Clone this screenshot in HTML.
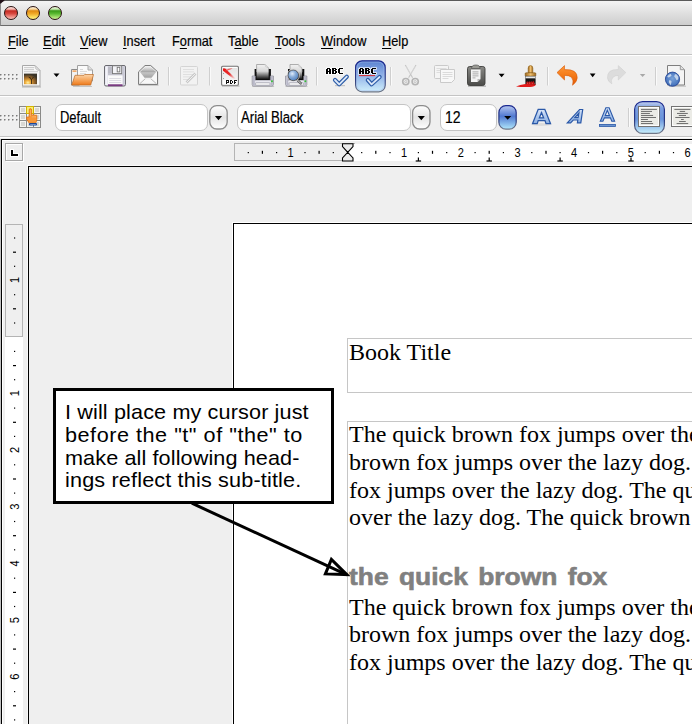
<!DOCTYPE html>
<html><head><meta charset="utf-8">
<style>
*{margin:0;padding:0;box-sizing:border-box}
html,body{width:692px;height:724px;overflow:hidden;background:#efefef;font-family:"Liberation Sans",sans-serif;position:relative}
.a{position:absolute}
#title{left:0;top:0;width:692px;height:26px;background:linear-gradient(#f4f4f4,#dedede 55%,#cdcdcd);border-top:1px solid #5a5a5a;border-left:1px solid #8a8a8a;border-bottom:1px solid #6a6a6a;border-top-left-radius:5px}
.btn{width:14px;height:14px;border-radius:50%;top:5.8px;border:1px solid #2a1210}
.ui{position:absolute;font-size:15px;color:#000;white-space:nowrap;transform:scaleX(0.85);transform-origin:0 0;line-height:17px;-webkit-text-stroke:0.2px #000}
.ui u{text-decoration:underline;text-decoration-thickness:1px;text-underline-offset:1.6px}
.serif{font-family:"Liberation Serif",serif;font-size:24px;color:#000;white-space:nowrap}
.combo{position:absolute;top:104px;height:27px;background:#fff;border:1px solid #c4c4c4;border-radius:7px}
</style></head><body>
<div id="title" class="a"></div>
<div class="a btn" style="left:4px;background:linear-gradient(#fde0dc 0,#f4b8b0 18%,#c42a22 32%,#d84840 55%,#f29a92 85%,#f8c0b8 100%)"></div>
<div class="a btn" style="left:26px;background:linear-gradient(#fdf0d8 0,#f8d8a0 18%,#e08a10 32%,#f0a828 55%,#fce060 85%,#fff080 100%)"></div>
<div class="a btn" style="left:48px;background:linear-gradient(#e8f8e0 0,#c8e8b0 18%,#3a9a18 32%,#58b830 55%,#a8e070 85%,#c8f098 100%)"></div>
<div class="a" style="left:0;top:0;width:5px;height:4px;background:#201018;clip-path:polygon(0 0,100% 0,0 100%)"></div>
<!-- separators -->
<div class="a" style="left:0;top:54px;width:692px;height:1px;background:#c4c4c4"></div>
<div class="a" style="left:0;top:55px;width:692px;height:1px;background:#fff"></div>
<div class="a" style="left:0;top:95px;width:692px;height:1px;background:#c4c4c4"></div>
<div class="a" style="left:0;top:96px;width:692px;height:1px;background:#fff"></div>
<div class="a" style="left:0;top:136px;width:692px;height:1px;background:#c4c4c4"></div>
<div class="a" style="left:0;top:137px;width:692px;height:1px;background:#fff"></div>

<span class="ui" style="left:8px;top:31.8px"><u>F</u>ile</span>
<span class="ui" style="left:43px;top:31.8px"><u>E</u>dit</span>
<span class="ui" style="left:80px;top:31.8px"><u>V</u>iew</span>
<span class="ui" style="left:123px;top:31.8px"><u>I</u>nsert</span>
<span class="ui" style="left:172px;top:31.8px">F<u>o</u>rmat</span>
<span class="ui" style="left:228px;top:31.8px">T<u>a</u>ble</span>
<span class="ui" style="left:275px;top:31.8px"><u>T</u>ools</span>
<span class="ui" style="left:321px;top:31.8px"><u>W</u>indow</span>
<span class="ui" style="left:382px;top:31.8px"><u>H</u>elp</span>

<!-- combos -->
<div class="combo" style="left:55px;width:153px"></div>
<div class="combo" style="left:237px;width:174px"></div>
<div class="combo" style="left:440px;width:57px"></div>
<span class="ui" style="left:60px;top:108.6px;font-size:15.8px;transform:scaleX(0.82)">Default</span>
<span class="ui" style="left:241px;top:108.8px;font-size:15.8px;transform:scaleX(0.835)">Arial Black</span>
<span class="ui" style="left:444.5px;top:109.2px;font-size:16px;transform:scaleX(0.88)">12</span>

<!-- frame + rulers -->
<div class="a" style="left:0;top:139px;width:1px;height:585px;background:#c0c0c0"></div>
<div class="a" style="left:1px;top:139px;width:691px;height:585px;border-top:1px solid #000;border-left:1px solid #000"></div>
<div class="a" style="left:2px;top:140px;width:690px;height:1px;background:#fff"></div>
<div class="a" style="left:2px;top:140px;width:1px;height:584px;background:#fff"></div>
<!-- tab button -->
<div class="a" style="left:5px;top:143px;width:18px;height:18px;border:1px solid #a8a8a8;background:#efefef;box-shadow:1px 1px 0 #fff, inset 1px 1px 0 #fff"></div>
<div class="a" style="left:10px;top:149px;width:4px;height:8px;background:#fff"></div>
<div class="a" style="left:10px;top:153px;width:9px;height:4px;background:#fff"></div>
<div class="a" style="left:11px;top:150px;width:2px;height:6px;background:#000"></div>
<div class="a" style="left:11px;top:154px;width:7px;height:2px;background:#000"></div>
<!-- document area -->
<div class="a" style="left:27px;top:165px;width:665px;height:559px;border-top:1px solid #fafafa;border-left:1px solid #fafafa"></div>
<div class="a" style="left:28px;top:166px;width:664px;height:558px;border-top:1px solid #000;border-left:1px solid #000;background:#efefef"></div>
<div class="a" style="left:232px;top:222px;width:470px;height:510px;border-top:1px solid #fff;border-left:1px solid #fff"></div>
<div class="a" style="left:233px;top:223px;width:470px;height:510px;background:#fff;border-top:1px solid #000;border-left:1px solid #000"></div>

<!-- ICONS and rulers svg -->
<svg class="a" style="left:0;top:0" width="692" height="724">
<defs>
<linearGradient id="gOr" x1="0" y1="0" x2="0" y2="1"><stop offset="0" stop-color="#fcd4a8"/><stop offset="0.5" stop-color="#f6a860"/><stop offset="1" stop-color="#ee7818"/></linearGradient>
<linearGradient id="gImg" x1="0" y1="0" x2="0" y2="1"><stop offset="0" stop-color="#5a4a30"/><stop offset="0.6" stop-color="#c08a30"/><stop offset="1" stop-color="#ffd060"/></linearGradient>
<linearGradient id="gEnv" x1="0" y1="0" x2="0" y2="1"><stop offset="0" stop-color="#f4f4f4"/><stop offset="0.5" stop-color="#a8a8a8"/><stop offset="1" stop-color="#e0e0e0"/></linearGradient>
<linearGradient id="gBlk" x1="0" y1="0" x2="0" y2="1"><stop offset="0" stop-color="#e8e8e8"/><stop offset="0.5" stop-color="#666"/><stop offset="1" stop-color="#000"/></linearGradient>
<linearGradient id="gPrn" x1="0" y1="0" x2="0" y2="1"><stop offset="0" stop-color="#f8f8fa"/><stop offset="1" stop-color="#c8c8d0"/></linearGradient>
<radialGradient id="gGlobe" cx="0.4" cy="0.35" r="0.7"><stop offset="0" stop-color="#9cc0f0"/><stop offset="0.6" stop-color="#3a6ab8"/><stop offset="1" stop-color="#1a3a80"/></radialGradient>
<linearGradient id="gAct" x1="0" y1="0" x2="0" y2="1"><stop offset="0" stop-color="#5a82d0"/><stop offset="0.45" stop-color="#8fb0e6"/><stop offset="1" stop-color="#d0f0fc"/></linearGradient>
<linearGradient id="gBlueBtn" x1="0" y1="0" x2="0" y2="1"><stop offset="0" stop-color="#b8c8f0"/><stop offset="0.45" stop-color="#5078d0"/><stop offset="1" stop-color="#b0e8fc"/></linearGradient>
<linearGradient id="gGrayBtn" x1="0" y1="0" x2="0" y2="1"><stop offset="0" stop-color="#ffffff"/><stop offset="0.5" stop-color="#e4e4e4"/><stop offset="1" stop-color="#ffffff"/></linearGradient>
<linearGradient id="gPaste" x1="0" y1="0" x2="0" y2="1"><stop offset="0" stop-color="#8a8a86"/><stop offset="1" stop-color="#4a4a48"/></linearGradient>
<linearGradient id="gBrush" x1="0" y1="0" x2="1" y2="0"><stop offset="0" stop-color="#a06a20"/><stop offset="0.5" stop-color="#f0c070"/><stop offset="1" stop-color="#a06a20"/></linearGradient>
<linearGradient id="gFA" x1="0" y1="0" x2="0" y2="1"><stop offset="0" stop-color="#d4e2f8"/><stop offset="1" stop-color="#8cb0e2"/></linearGradient>
<linearGradient id="gAct2" x1="0" y1="0" x2="0" y2="1"><stop offset="0" stop-color="#c4d0f0"/><stop offset="0.2" stop-color="#7a9ee0"/><stop offset="0.55" stop-color="#6a94dc"/><stop offset="1" stop-color="#c8f0fc"/></linearGradient>
<linearGradient id="gUndo" x1="0" y1="0" x2="0" y2="1"><stop offset="0" stop-color="#ff9838"/><stop offset="0.5" stop-color="#f47a18"/><stop offset="1" stop-color="#e05a08"/></linearGradient>
<linearGradient id="gBtnStroke" x1="0" y1="0" x2="0" y2="1"><stop offset="0" stop-color="#1a2890"/><stop offset="0.6" stop-color="#2a3a80"/><stop offset="1" stop-color="#707888"/></linearGradient>
</defs>
<rect x="0" y="74" width="1.5" height="1.5" fill="#7a7a7a"/><rect x="1.5" y="75.5" width="1" height="1" fill="#fff"/>
<rect x="0" y="78" width="1.5" height="1.5" fill="#7a7a7a"/><rect x="1.5" y="79.5" width="1" height="1" fill="#fff"/>
<rect x="4" y="74" width="1.5" height="1.5" fill="#7a7a7a"/><rect x="5.5" y="75.5" width="1" height="1" fill="#fff"/>
<rect x="4" y="78" width="1.5" height="1.5" fill="#7a7a7a"/><rect x="5.5" y="79.5" width="1" height="1" fill="#fff"/>
<rect x="8" y="74" width="1.5" height="1.5" fill="#7a7a7a"/><rect x="9.5" y="75.5" width="1" height="1" fill="#fff"/>
<rect x="8" y="78" width="1.5" height="1.5" fill="#7a7a7a"/><rect x="9.5" y="79.5" width="1" height="1" fill="#fff"/>
<rect x="12" y="74" width="1.5" height="1.5" fill="#7a7a7a"/><rect x="13.5" y="75.5" width="1" height="1" fill="#fff"/>
<rect x="12" y="78" width="1.5" height="1.5" fill="#7a7a7a"/><rect x="13.5" y="79.5" width="1" height="1" fill="#fff"/>
<rect x="16" y="74" width="1.5" height="1.5" fill="#7a7a7a"/><rect x="17.5" y="75.5" width="1" height="1" fill="#fff"/>
<rect x="16" y="78" width="1.5" height="1.5" fill="#7a7a7a"/><rect x="17.5" y="79.5" width="1" height="1" fill="#fff"/>
<rect x="0" y="115" width="1.5" height="1.5" fill="#7a7a7a"/><rect x="1.5" y="116.5" width="1" height="1" fill="#fff"/>
<rect x="0" y="119" width="1.5" height="1.5" fill="#7a7a7a"/><rect x="1.5" y="120.5" width="1" height="1" fill="#fff"/>
<rect x="4" y="115" width="1.5" height="1.5" fill="#7a7a7a"/><rect x="5.5" y="116.5" width="1" height="1" fill="#fff"/>
<rect x="4" y="119" width="1.5" height="1.5" fill="#7a7a7a"/><rect x="5.5" y="120.5" width="1" height="1" fill="#fff"/>
<rect x="8" y="115" width="1.5" height="1.5" fill="#7a7a7a"/><rect x="9.5" y="116.5" width="1" height="1" fill="#fff"/>
<rect x="8" y="119" width="1.5" height="1.5" fill="#7a7a7a"/><rect x="9.5" y="120.5" width="1" height="1" fill="#fff"/>
<rect x="12" y="115" width="1.5" height="1.5" fill="#7a7a7a"/><rect x="13.5" y="116.5" width="1" height="1" fill="#fff"/>
<rect x="12" y="119" width="1.5" height="1.5" fill="#7a7a7a"/><rect x="13.5" y="120.5" width="1" height="1" fill="#fff"/>
<rect x="16" y="115" width="1.5" height="1.5" fill="#7a7a7a"/><rect x="17.5" y="116.5" width="1" height="1" fill="#fff"/>
<rect x="16" y="119" width="1.5" height="1.5" fill="#7a7a7a"/><rect x="17.5" y="120.5" width="1" height="1" fill="#fff"/>
<g>
<defs><radialGradient id="gSun" cx="0.3" cy="0.85" r="0.8"><stop offset="0" stop-color="#fff0a0"/><stop offset="0.25" stop-color="#f0b040"/><stop offset="0.6" stop-color="#a06a28"/><stop offset="1" stop-color="#3a3428"/></radialGradient></defs>
<rect x="22" y="86.2" width="19" height="1.4" fill="#8a8a8a" opacity="0.5"/>
<path d="M22.5,65.5 h12.5 l5,5 v15.5 h-17.5 z" fill="#f8f8f8" stroke="#a8a8a8"/>
<path d="M35,65.5 q0,5 5,5 l-5,-5 z" fill="#e4e4e4" stroke="#b8b8b8" stroke-width="0.8"/>
<rect x="24" y="67" width="10" height="1.2" fill="#cfcfcf"/><rect x="24" y="69" width="10" height="1.2" fill="#cfcfcf"/><rect x="24" y="71" width="14" height="1.2" fill="#d4d4d4"/>
<rect x="24" y="73.6" width="13" height="10.6" fill="url(#gSun)"/>
<path d="M31.5,84 v-4.5 M31.5,80 l-1.8,-3 M31.5,79.5 l2,-2.5 M30.2,78 l-1.5,-0.8" stroke="#2a2010" stroke-width="0.8" fill="none"/>
</g>
<polygon points="53.5,73.5 59.5,73.5 56.5,77" fill="#000"/>
<g>
<path d="M71.5,69.5 h8 v15.5 h-8 z" fill="#f2f2f2" stroke="#8a8a8a"/>
<rect x="72.5" y="70.5" width="4" height="1.2" fill="#f08a30"/>
<path d="M77.5,65.5 h10.5 l4.5,4.5 v11 h-15 z" fill="#fafafa" stroke="#a0a0a0"/>
<path d="M88,65.5 v4.5 h4.5" fill="#ddd" stroke="#aaa"/>
<rect x="80" y="69" width="3" height="0.7" fill="#c8c8c8"/><rect x="80" y="71.2" width="7" height="0.7" fill="#d0d0d0"/><rect x="80" y="73.2" width="6" height="0.7" fill="#d0d0d0"/>
<path d="M75,75.3 h9 l0.6,-0.8 h8.9 l-2.8,10.6 h-19 z" fill="url(#gOr)" stroke="#b86a28" stroke-width="0.7"/>
<rect x="73" y="86" width="19" height="1" fill="#999" opacity="0.5"/>
</g>
<g>
<rect x="104.5" y="65.5" width="21" height="20.5" rx="1.5" fill="#dedee8" stroke="#6a6a70"/>
<rect x="105.5" y="66.5" width="2" height="18.5" fill="#f4f4fa"/>
<rect x="122.5" y="66.5" width="2" height="18.5" fill="#c8c8d4"/>
<rect x="108" y="66.5" width="4.6" height="7.2" fill="#bcbcc6"/>
<rect x="108" y="73.7" width="14.5" height="1.5" fill="#c4c4ce"/>
<rect x="112.5" y="65.8" width="9.2" height="7.8" fill="#f4f4f8" stroke="#777" stroke-width="0.9"/>
<rect x="117.2" y="67.3" width="2.6" height="4.6" fill="#fff" stroke="#777" stroke-width="0.9"/>
<rect x="108" y="75.5" width="14.5" height="9" fill="#fafafa"/>
<rect x="109.2" y="78.2" width="12" height="0.7" fill="#cfcfd8"/><rect x="109.2" y="80.3" width="12" height="0.7" fill="#cfcfd8"/><rect x="109.2" y="82.3" width="12" height="0.7" fill="#cfcfd8"/>
<rect x="108" y="84.3" width="14.5" height="1.9" fill="#7a3a80"/>
</g>
<g>
<defs><linearGradient id="gEnv2" x1="0" y1="0" x2="0" y2="1"><stop offset="0" stop-color="#f0f0f0"/><stop offset="0.45" stop-color="#a8a8a8"/><stop offset="0.55" stop-color="#c4c4c4"/><stop offset="1" stop-color="#a0a0a0"/></linearGradient></defs>
<rect x="138.5" y="84.6" width="20" height="1.3" fill="#999" opacity="0.45"/>
<path d="M138.6,71.8 L145,65.6 h5.8 L157.6,71.8 v12.6 h-19 z" fill="#f8f8f8" stroke="#727272" stroke-width="1"/>
<path d="M140,72 L145.4,66.6 h5 L156.2,72 L151.5,77.8 h-7 z" fill="url(#gEnv2)"/>
<path d="M140,83.5 L145.5,78.5 M156.2,83.5 L150.5,78.5" stroke="#a8a8a8" stroke-width="0.8"/>
<rect x="145" y="78.4" width="6" height="1" fill="#e8e8e8"/>
</g>
<rect x="168" y="67" width="1" height="18.5" fill="#cfcfcf"/><rect x="169" y="67" width="1" height="18.5" fill="#fafafa"/>
<g opacity="1">
<rect x="180.5" y="66.5" width="17" height="18.5" rx="1" fill="#f2f2f2" stroke="#d4d4d4"/>
<rect x="183" y="69" width="11" height="0.8" fill="#dadada"/><rect x="183" y="71.5" width="11" height="0.8" fill="#dadada"/><rect x="183" y="74" width="11" height="0.8" fill="#dadada"/><rect x="183" y="76.5" width="8" height="0.8" fill="#dadada"/><rect x="183" y="79" width="6" height="0.8" fill="#dadada"/>
<path d="M186.5,82.5 L195.5,73.5" stroke="#c8c8c8" stroke-width="2.6"/>
<path d="M186.5,82.5 L195.5,73.5" stroke="#eee" stroke-width="1"/>
</g>
<rect x="209" y="67" width="1" height="18.5" fill="#cfcfcf"/><rect x="210" y="67" width="1" height="18.5" fill="#fafafa"/>
<g>
<defs><linearGradient id="gRed" x1="0" y1="0" x2="1" y2="1"><stop offset="0" stop-color="#e81010"/><stop offset="0.55" stop-color="#e83030"/><stop offset="1" stop-color="#f4c0c0" stop-opacity="0.3"/></linearGradient>
<linearGradient id="gPdfBg" x1="0" y1="0" x2="0" y2="1"><stop offset="0" stop-color="#e4e4e4"/><stop offset="1" stop-color="#f8f8f8"/></linearGradient></defs>
<rect x="222" y="85.6" width="17.5" height="1.2" fill="#999" opacity="0.5"/>
<rect x="221.6" y="66.2" width="16.8" height="19" rx="1" fill="#fefefe" stroke="#727272" stroke-width="1.1"/>
<rect x="223" y="68" width="14" height="16" fill="url(#gPdfBg)"/>
<path d="M223,68.6 Q224,67.8 225.6,68.8 L235.5,78.6 Q234.5,79.2 233,78.4 L223,70.8 z" fill="url(#gRed)"/>
<path d="M225,70.5 Q229,68 232.5,68.2 L231,69.3 Q228,70 225.8,71.5 z" fill="#e84040" opacity="0.8"/>
<rect x="223" y="73" width="0.9" height="0.9" fill="#888"/><rect x="223" y="78" width="0.9" height="0.9" fill="#888"/>
<rect x="223" y="80" width="14" height="4.5" fill="#fefefe"/>

<path d="M226,80h1v1h-1zM227,80h1v1h-1zM228,80h1v1h-1zM226,81h1v1h-1zM228,81h1v1h-1zM226,82h1v1h-1zM227,82h1v1h-1zM228,82h1v1h-1zM226,83h1v1h-1zM230,80h1v1h-1zM231,80h1v1h-1zM230,81h1v1h-1zM232,81h1v1h-1zM230,82h1v1h-1zM232,82h1v1h-1zM230,83h1v1h-1zM231,83h1v1h-1zM234,80h1v1h-1zM235,80h1v1h-1zM236,80h1v1h-1zM234,81h1v1h-1zM234,82h1v1h-1zM235,82h1v1h-1zM234,83h1v1h-1z" fill="#141414"/>
<g>
<defs><linearGradient id="gPap251" x1="0" y1="0" x2="0" y2="1"><stop offset="0" stop-color="#f4f4f4"/><stop offset="0.45" stop-color="#d8d8d8"/><stop offset="1" stop-color="#000"/></linearGradient></defs>
<rect x="252.1" y="86" width="22" height="1" fill="#888" opacity="0.4"/>
<rect x="254.6" y="69" width="16.3" height="11" fill="#111"/>
<path d="M256.6,64 h8.2 l3.8,3.8 v12.2 h-12 z" fill="url(#gPap251)"/>
<path d="M256.6,72 v-7.5 h8.2 l3.8,3.8 v4" fill="none" stroke="#9a9a9a" stroke-width="0.8"/>
<path d="M264.8,64 q0,3.8 3.8,3.8 l-3.8,-3.8 z" fill="#e8e8e8" stroke="#bbb" stroke-width="0.5"/>
<path d="M252.2,76 h3 v4.5 h15.2 v-4.5 h3 v8.5 q0,1.5 -1.5,1.5 h-18.2 q-1.5,0 -1.5,-1.5 z" fill="#dcdce6" stroke="#8a8a96" stroke-width="0.8"/>
<rect x="253.0" y="76.6" width="1.8" height="8.5" fill="#b8b8c8"/>
<rect x="271.0" y="76.6" width="1.8" height="8.5" fill="#b8b8c8"/>
<rect x="255.2" y="80.5" width="15.2" height="1.5" fill="#e8e8f0"/>
<rect x="255.6" y="82.8" width="14.4" height="2.4" rx="0.8" fill="#fff" stroke="#8a8a96" stroke-width="0.6"/>
<rect x="271.1" y="80.4" width="1.7" height="1.7" fill="#30c030"/>
</g>
<g>
<defs><linearGradient id="gPap285" x1="0" y1="0" x2="0" y2="1"><stop offset="0" stop-color="#f4f4f4"/><stop offset="0.45" stop-color="#d8d8d8"/><stop offset="1" stop-color="#000"/></linearGradient></defs>
<rect x="285.5" y="86" width="22" height="1" fill="#888" opacity="0.4"/>
<rect x="288" y="69" width="16.3" height="11" fill="#111"/>
<path d="M290,64 h8.2 l3.8,3.8 v12.2 h-12 z" fill="url(#gPap285)"/>
<path d="M290,72 v-7.5 h8.2 l3.8,3.8 v4" fill="none" stroke="#9a9a9a" stroke-width="0.8"/>
<path d="M298.2,64 q0,3.8 3.8,3.8 l-3.8,-3.8 z" fill="#e8e8e8" stroke="#bbb" stroke-width="0.5"/>
<path d="M285.6,76 h3 v4.5 h15.2 v-4.5 h3 v8.5 q0,1.5 -1.5,1.5 h-18.2 q-1.5,0 -1.5,-1.5 z" fill="#dcdce6" stroke="#8a8a96" stroke-width="0.8"/>
<rect x="286.4" y="76.6" width="1.8" height="8.5" fill="#b8b8c8"/>
<rect x="304.4" y="76.6" width="1.8" height="8.5" fill="#b8b8c8"/>
<rect x="288.6" y="80.5" width="15.2" height="1.5" fill="#e8e8f0"/>
<rect x="289" y="82.8" width="14.4" height="2.4" rx="0.8" fill="#fff" stroke="#8a8a96" stroke-width="0.6"/>
<rect x="304.5" y="80.4" width="1.7" height="1.7" fill="#30c030"/>
</g>
<g>
<defs><radialGradient id="gMag" cx="0.4" cy="0.35" r="0.7"><stop offset="0" stop-color="#e0ecfa"/><stop offset="0.45" stop-color="#88acd8"/><stop offset="1" stop-color="#4a7ab8"/></radialGradient></defs>
<path d="M297.2,79.8 L300.8,83.4" stroke="#555" stroke-width="2.4" stroke-linecap="round"/>
<path d="M297.2,79.8 L300.8,83.4" stroke="#ddd" stroke-width="1" stroke-linecap="round"/>
<circle cx="293.3" cy="75.3" r="5.4" fill="url(#gMag)" stroke="#4a4a4a" stroke-width="0.9"/>
<circle cx="293.3" cy="75.3" r="6.2" fill="none" stroke="#ddd" stroke-width="0.6"/>
</g>
<rect x="316" y="67" width="1" height="18.5" fill="#cfcfcf"/><rect x="317" y="67" width="1" height="18.5" fill="#fafafa"/>
<path d="M326.2,67.2h2.6v2.6h-2.6zM327.2,67.2h2.6v2.6h-2.6zM328.2,67.2h2.6v2.6h-2.6zM325.2,68.2h2.6v2.6h-2.6zM326.2,68.2h2.6v2.6h-2.6zM328.2,68.2h2.6v2.6h-2.6zM329.2,68.2h2.6v2.6h-2.6zM325.2,69.2h2.6v2.6h-2.6zM326.2,69.2h2.6v2.6h-2.6zM328.2,69.2h2.6v2.6h-2.6zM329.2,69.2h2.6v2.6h-2.6zM325.2,70.2h2.6v2.6h-2.6zM326.2,70.2h2.6v2.6h-2.6zM327.2,70.2h2.6v2.6h-2.6zM328.2,70.2h2.6v2.6h-2.6zM329.2,70.2h2.6v2.6h-2.6zM325.2,71.2h2.6v2.6h-2.6zM326.2,71.2h2.6v2.6h-2.6zM328.2,71.2h2.6v2.6h-2.6zM329.2,71.2h2.6v2.6h-2.6zM325.2,72.2h2.6v2.6h-2.6zM326.2,72.2h2.6v2.6h-2.6zM328.2,72.2h2.6v2.6h-2.6zM329.2,72.2h2.6v2.6h-2.6zM331.2,67.2h2.6v2.6h-2.6zM332.2,67.2h2.6v2.6h-2.6zM333.2,67.2h2.6v2.6h-2.6zM334.2,67.2h2.6v2.6h-2.6zM331.2,68.2h2.6v2.6h-2.6zM332.2,68.2h2.6v2.6h-2.6zM334.2,68.2h2.6v2.6h-2.6zM335.2,68.2h2.6v2.6h-2.6zM331.2,69.2h2.6v2.6h-2.6zM332.2,69.2h2.6v2.6h-2.6zM333.2,69.2h2.6v2.6h-2.6zM334.2,69.2h2.6v2.6h-2.6zM331.2,70.2h2.6v2.6h-2.6zM332.2,70.2h2.6v2.6h-2.6zM334.2,70.2h2.6v2.6h-2.6zM335.2,70.2h2.6v2.6h-2.6zM331.2,71.2h2.6v2.6h-2.6zM332.2,71.2h2.6v2.6h-2.6zM334.2,71.2h2.6v2.6h-2.6zM335.2,71.2h2.6v2.6h-2.6zM331.2,72.2h2.6v2.6h-2.6zM332.2,72.2h2.6v2.6h-2.6zM333.2,72.2h2.6v2.6h-2.6zM334.2,72.2h2.6v2.6h-2.6zM338.2,67.2h2.6v2.6h-2.6zM339.2,67.2h2.6v2.6h-2.6zM340.2,67.2h2.6v2.6h-2.6zM341.2,67.2h2.6v2.6h-2.6zM337.2,68.2h2.6v2.6h-2.6zM338.2,68.2h2.6v2.6h-2.6zM337.2,69.2h2.6v2.6h-2.6zM338.2,69.2h2.6v2.6h-2.6zM337.2,70.2h2.6v2.6h-2.6zM338.2,70.2h2.6v2.6h-2.6zM337.2,71.2h2.6v2.6h-2.6zM338.2,71.2h2.6v2.6h-2.6zM338.2,72.2h2.6v2.6h-2.6zM339.2,72.2h2.6v2.6h-2.6zM340.2,72.2h2.6v2.6h-2.6zM341.2,72.2h2.6v2.6h-2.6z" fill="#fff" opacity="0.85"/>
<path d="M327,68h1v1h-1zM328,68h1v1h-1zM329,68h1v1h-1zM326,69h1v1h-1zM327,69h1v1h-1zM329,69h1v1h-1zM330,69h1v1h-1zM326,70h1v1h-1zM327,70h1v1h-1zM329,70h1v1h-1zM330,70h1v1h-1zM326,71h1v1h-1zM327,71h1v1h-1zM328,71h1v1h-1zM329,71h1v1h-1zM330,71h1v1h-1zM326,72h1v1h-1zM327,72h1v1h-1zM329,72h1v1h-1zM330,72h1v1h-1zM326,73h1v1h-1zM327,73h1v1h-1zM329,73h1v1h-1zM330,73h1v1h-1zM332,68h1v1h-1zM333,68h1v1h-1zM334,68h1v1h-1zM335,68h1v1h-1zM332,69h1v1h-1zM333,69h1v1h-1zM335,69h1v1h-1zM336,69h1v1h-1zM332,70h1v1h-1zM333,70h1v1h-1zM334,70h1v1h-1zM335,70h1v1h-1zM332,71h1v1h-1zM333,71h1v1h-1zM335,71h1v1h-1zM336,71h1v1h-1zM332,72h1v1h-1zM333,72h1v1h-1zM335,72h1v1h-1zM336,72h1v1h-1zM332,73h1v1h-1zM333,73h1v1h-1zM334,73h1v1h-1zM335,73h1v1h-1zM339,68h1v1h-1zM340,68h1v1h-1zM341,68h1v1h-1zM342,68h1v1h-1zM338,69h1v1h-1zM339,69h1v1h-1zM338,70h1v1h-1zM339,70h1v1h-1zM338,71h1v1h-1zM339,71h1v1h-1zM338,72h1v1h-1zM339,72h1v1h-1zM339,73h1v1h-1zM340,73h1v1h-1zM341,73h1v1h-1zM342,73h1v1h-1z" fill="#000"/>
<rect x="335" y="85" width="10" height="1.2" fill="#888" opacity="0.4"/>
<path d="M335,80 L339.2,84.3 L346.8,76.7" stroke="#2c5ca8" stroke-width="4.2" fill="none" stroke-linecap="round" stroke-linejoin="round"/>
<path d="M335,80 L339.2,84.3 L346.8,76.7" stroke="#dce8f8" stroke-width="1.8" fill="none" stroke-linecap="round" stroke-linejoin="round"/>
<rect x="355.6" y="60.8" width="29.6" height="31" rx="6.5" fill="url(#gAct)" stroke="url(#gBtnStroke)" stroke-width="1.2"/>
<rect x="356.9" y="62.1" width="27" height="28.4" rx="5.5" fill="none" stroke="#a8c0ec" stroke-width="0.8" opacity="0.6"/>
<path d="M359.2,67.2h2.6v2.6h-2.6zM360.2,67.2h2.6v2.6h-2.6zM361.2,67.2h2.6v2.6h-2.6zM358.2,68.2h2.6v2.6h-2.6zM359.2,68.2h2.6v2.6h-2.6zM361.2,68.2h2.6v2.6h-2.6zM362.2,68.2h2.6v2.6h-2.6zM358.2,69.2h2.6v2.6h-2.6zM359.2,69.2h2.6v2.6h-2.6zM361.2,69.2h2.6v2.6h-2.6zM362.2,69.2h2.6v2.6h-2.6zM358.2,70.2h2.6v2.6h-2.6zM359.2,70.2h2.6v2.6h-2.6zM360.2,70.2h2.6v2.6h-2.6zM361.2,70.2h2.6v2.6h-2.6zM362.2,70.2h2.6v2.6h-2.6zM358.2,71.2h2.6v2.6h-2.6zM359.2,71.2h2.6v2.6h-2.6zM361.2,71.2h2.6v2.6h-2.6zM362.2,71.2h2.6v2.6h-2.6zM358.2,72.2h2.6v2.6h-2.6zM359.2,72.2h2.6v2.6h-2.6zM361.2,72.2h2.6v2.6h-2.6zM362.2,72.2h2.6v2.6h-2.6zM364.2,67.2h2.6v2.6h-2.6zM365.2,67.2h2.6v2.6h-2.6zM366.2,67.2h2.6v2.6h-2.6zM367.2,67.2h2.6v2.6h-2.6zM364.2,68.2h2.6v2.6h-2.6zM365.2,68.2h2.6v2.6h-2.6zM367.2,68.2h2.6v2.6h-2.6zM368.2,68.2h2.6v2.6h-2.6zM364.2,69.2h2.6v2.6h-2.6zM365.2,69.2h2.6v2.6h-2.6zM366.2,69.2h2.6v2.6h-2.6zM367.2,69.2h2.6v2.6h-2.6zM364.2,70.2h2.6v2.6h-2.6zM365.2,70.2h2.6v2.6h-2.6zM367.2,70.2h2.6v2.6h-2.6zM368.2,70.2h2.6v2.6h-2.6zM364.2,71.2h2.6v2.6h-2.6zM365.2,71.2h2.6v2.6h-2.6zM367.2,71.2h2.6v2.6h-2.6zM368.2,71.2h2.6v2.6h-2.6zM364.2,72.2h2.6v2.6h-2.6zM365.2,72.2h2.6v2.6h-2.6zM366.2,72.2h2.6v2.6h-2.6zM367.2,72.2h2.6v2.6h-2.6zM371.2,67.2h2.6v2.6h-2.6zM372.2,67.2h2.6v2.6h-2.6zM373.2,67.2h2.6v2.6h-2.6zM374.2,67.2h2.6v2.6h-2.6zM370.2,68.2h2.6v2.6h-2.6zM371.2,68.2h2.6v2.6h-2.6zM370.2,69.2h2.6v2.6h-2.6zM371.2,69.2h2.6v2.6h-2.6zM370.2,70.2h2.6v2.6h-2.6zM371.2,70.2h2.6v2.6h-2.6zM370.2,71.2h2.6v2.6h-2.6zM371.2,71.2h2.6v2.6h-2.6zM371.2,72.2h2.6v2.6h-2.6zM372.2,72.2h2.6v2.6h-2.6zM373.2,72.2h2.6v2.6h-2.6zM374.2,72.2h2.6v2.6h-2.6z" fill="#fff" opacity="0.85"/>
<path d="M360,68h1v1h-1zM361,68h1v1h-1zM362,68h1v1h-1zM359,69h1v1h-1zM360,69h1v1h-1zM362,69h1v1h-1zM363,69h1v1h-1zM359,70h1v1h-1zM360,70h1v1h-1zM362,70h1v1h-1zM363,70h1v1h-1zM359,71h1v1h-1zM360,71h1v1h-1zM361,71h1v1h-1zM362,71h1v1h-1zM363,71h1v1h-1zM359,72h1v1h-1zM360,72h1v1h-1zM362,72h1v1h-1zM363,72h1v1h-1zM359,73h1v1h-1zM360,73h1v1h-1zM362,73h1v1h-1zM363,73h1v1h-1zM365,68h1v1h-1zM366,68h1v1h-1zM367,68h1v1h-1zM368,68h1v1h-1zM365,69h1v1h-1zM366,69h1v1h-1zM368,69h1v1h-1zM369,69h1v1h-1zM365,70h1v1h-1zM366,70h1v1h-1zM367,70h1v1h-1zM368,70h1v1h-1zM365,71h1v1h-1zM366,71h1v1h-1zM368,71h1v1h-1zM369,71h1v1h-1zM365,72h1v1h-1zM366,72h1v1h-1zM368,72h1v1h-1zM369,72h1v1h-1zM365,73h1v1h-1zM366,73h1v1h-1zM367,73h1v1h-1zM368,73h1v1h-1zM372,68h1v1h-1zM373,68h1v1h-1zM374,68h1v1h-1zM375,68h1v1h-1zM371,69h1v1h-1zM372,69h1v1h-1zM371,70h1v1h-1zM372,70h1v1h-1zM371,71h1v1h-1zM372,71h1v1h-1zM371,72h1v1h-1zM372,72h1v1h-1zM372,73h1v1h-1zM373,73h1v1h-1zM374,73h1v1h-1zM375,73h1v1h-1z" fill="#000"/>
<path d="M359,76 l1,-0.8 l1,0.8 l1,-0.8 l1,0.8 l1,-0.8 l1,0.8 l1,-0.8 l1,0.8 l1,-0.8 l1,0.8 l1,-0.8 l1,0.8 l1,-0.8 l1,0.8 l1,-0.8 l1,0.8" stroke="#e01818" stroke-width="0.9" fill="none"/>
<path d="M367.8,80 L371.6,84.3 L379.6,77" stroke="#2c5ca8" stroke-width="4.2" fill="none" stroke-linecap="round" stroke-linejoin="round"/>
<path d="M367.8,80 L371.6,84.3 L379.6,77" stroke="#dce8f8" stroke-width="1.8" fill="none" stroke-linecap="round" stroke-linejoin="round"/>
<rect x="390" y="67" width="1" height="18.5" fill="#cfcfcf"/><rect x="391" y="67" width="1" height="18.5" fill="#fafafa"/>
<g fill="none">
<path d="M405.3,65 L412.6,77.8 M416,65 L408.6,77.8" stroke="#c4c4c4" stroke-width="1.1"/>
<path d="M405.8,66 L410.5,74 M415.5,66 L410.8,74" stroke="#e4e4e4" stroke-width="0.5"/>
<circle cx="405.8" cy="81.6" r="3.1" stroke="#b4b4b4" stroke-width="1.6"/>
<circle cx="415.2" cy="81.6" r="3.1" stroke="#b4b4b4" stroke-width="1.6"/>
<circle cx="405.8" cy="81.6" r="1.1" stroke="#bcbcbc" stroke-width="0.8"/>
<circle cx="415.2" cy="81.6" r="1.1" stroke="#bcbcbc" stroke-width="0.8"/>
</g>
<g>
<rect x="434.5" y="65.5" width="14" height="13" rx="1" fill="#f4f4f4" stroke="#cacaca"/>
<rect x="436.5" y="68" width="10" height="0.8" fill="#d8d8d8"/><rect x="436.5" y="70" width="10" height="0.8" fill="#d8d8d8"/><rect x="436.5" y="72" width="6" height="0.8" fill="#d8d8d8"/>
<path d="M440.5,69.5 h14 v10 l-3,3 h-11 z" fill="#f8f8f8" stroke="#cacaca"/>
<rect x="442.5" y="72" width="10" height="0.8" fill="#d4d4d4"/><rect x="442.5" y="74" width="10" height="0.8" fill="#d4d4d4"/><rect x="442.5" y="76" width="10" height="0.8" fill="#d4d4d4"/><rect x="442.5" y="78" width="6" height="0.8" fill="#d4d4d4"/>
</g>
<g>
<rect x="468" y="85.5" width="18" height="1.3" fill="#777" opacity="0.5"/>
<rect x="467.5" y="66.5" width="17.5" height="19" rx="2.2" fill="url(#gPaste)" stroke="#3e3e3c" stroke-width="0.9"/>
<path d="M471.5,68.5 q0,-3.5 4.3,-3.5 q4.3,0 4.3,3.5 z" fill="#9a9a94" stroke="#555" stroke-width="0.7"/>
<path d="M471,69.5 h9.5 v9.5 l-3,3 h-6.5 z" fill="#f4f4f4"/>
<path d="M477.5,82 v-3 h3" fill="#b8b8b8"/>
<rect x="472.5" y="71.5" width="6" height="0.8" fill="#999"/><rect x="472.5" y="73.5" width="6" height="0.8" fill="#999"/><rect x="472.5" y="75.5" width="6" height="0.8" fill="#999"/><rect x="472.5" y="77.5" width="3" height="0.8" fill="#999"/>
</g>
<polygon points="498.6,73.8 504.6,73.8 501.6,77.2" fill="#000"/>
<g>
<path d="M528.2,73 v-4.8 q0,-2.6 2.3,-2.6 q2.3,0 2.3,2.6 v4.8 z" fill="url(#gBrush)" stroke="#8a5a10" stroke-width="0.6"/>
<rect x="525.2" y="72.8" width="10.6" height="3.4" rx="0.8" fill="url(#gBrush)" stroke="#7a5210" stroke-width="0.6"/>
<rect x="525.4" y="76.2" width="10.2" height="2.3" fill="#e8e8e8" stroke="#555" stroke-width="0.5"/>
<path d="M525.4,78.5 h10.2 v6.5 h-10.2 z" fill="#151515"/>
<path d="M526.2,82.6 l1,-1.6 l1,1.4 l1,-1.5 l1,1.4 l1,-1.4 l1,1.3 l1,-1.4 l1,1.2 v2.8 h-8 z" fill="#b81414"/>
<path d="M527,82.8 h0.7 v1.5 h-0.7z M529.4,82.6 h0.7 v1.6 h-0.7z M531.9,82.8 h0.7 v1.5 h-0.7z M534,82.7 h0.6 v1.5 h-0.6z" fill="#ff7a7a" opacity="0.7"/>
<path d="M516,86.4 Q520,84.8 525.4,84 L536,84.6 Q535,86.8 530,87 Q522,87.4 516,86.4 z" fill="#e01a1a"/>
</g>
<rect x="547" y="67" width="1" height="18.5" fill="#cfcfcf"/><rect x="548" y="67" width="1" height="18.5" fill="#fafafa"/>
<g>
<path d="M557,72.6 L564.5,65.6 L564.5,69.6 Q577.5,69 577.2,78 Q577,82 572.5,85.2 Q574,80.5 571.5,77.2 Q569,75.2 564.5,75.4 L564.5,80 z" fill="url(#gUndo)" stroke="#d85a08" stroke-width="0.6"/>
</g>
<polygon points="589.8,73.6 595.5,73.6 592.65,77.2" fill="#000"/>
<g>
<path d="M625.8,72.6 L618.3,65.6 L618.3,69.6 Q607,69 607.5,78 Q607.8,81.5 611.8,83.8 Q610.5,80 612.8,77.4 Q615.3,75.3 618.3,75.4 L618.3,80 z" fill="#dcdcdc" stroke="#d0d0d0" stroke-width="0.6"/>
</g>
<polygon points="639.8,73.9 645.4,73.9 642.5999999999999,77" fill="#a8a8a8"/>
<rect x="655" y="67" width="1" height="18.5" fill="#cfcfcf"/><rect x="656" y="67" width="1" height="18.5" fill="#fafafa"/>
<g>
<defs><radialGradient id="gGlobe2" cx="0.5" cy="0.45" r="0.6"><stop offset="0" stop-color="#7aa2d8"/><stop offset="0.75" stop-color="#4a78c0"/><stop offset="1" stop-color="#2a52a0"/></radialGradient></defs>
<rect x="669" y="85.6" width="17" height="1.2" fill="#888" opacity="0.4"/>
<path d="M667.5,65.5 h12.8 l4.2,4.2 v15.3 h-17 z" fill="#f4f4f4" stroke="#7e7e7e"/>
<path d="M680.3,65.5 v4.2 h4.2" fill="#e0e0e0" stroke="#999"/>
<circle cx="672.5" cy="79.2" r="7.1" fill="url(#gGlobe2)" stroke="#2a4a98" stroke-width="0.9"/>
<path d="M667.2,76.5 q1.5,-2.8 3.6,-2.6 l0.8,1.6 l-1.6,1.6 l-1.8,0.4 z M674.8,74.6 l1.2,-0.6 l2.2,2.2 q0.6,1.6 -0.2,3.4 l-1.4,0.6 l-1.2,-2.2 l-1.2,-1.6 z M669,80.4 q1.8,-0.4 2.6,1.2 l-0.4,2 l-0.8,1.8 l-0.8,-2 l-0.8,-1.2 z" fill="#dce6f2" opacity="0.8"/>
</g>
<g>
<rect x="19.5" y="106.5" width="21" height="21" fill="#f4f4f0" stroke="#8a8a88"/>
<path d="M26.5,106.5 v21 M33.5,106.5 v21 M19.5,113.5 h21 M19.5,120.5 h21" stroke="#8a8a88" stroke-width="1"/>

<rect x="21" y="108" width="4" height="4" fill="#d8d8d4"/>
<rect x="21" y="115" width="4" height="4" fill="#d8d8d4"/>
<rect x="21" y="122" width="4" height="4" fill="#d8d8d4"/>
<rect x="28" y="108" width="4" height="4" fill="#d8d8d4"/>
<rect x="28" y="115" width="4" height="4" fill="#d8d8d4"/>
<rect x="28" y="122" width="4" height="4" fill="#d8d8d4"/>
<rect x="35" y="108" width="4" height="4" fill="#d8d8d4"/>
<rect x="35" y="115" width="4" height="4" fill="#d8d8d4"/>
<rect x="35" y="122" width="4" height="4" fill="#d8d8d4"/>
<rect x="26.5" y="106.5" width="7" height="7" fill="#f8f070" stroke="#d4b400" stroke-width="1"/>
<path d="M29.2,117 v-7 q0,-1.4 1.2,-1.4 q1.2,0 1.2,1.4 v5.2 q0.6,-0.8 1.3,0 q0.6,-0.8 1.3,0 q0.6,-0.8 1.3,0 q0.6,-0.6 1.3,0.2 v4.2 q0,2.6 -1.6,3.6 h-5.6 q-1.8,-1.2 -2.6,-3.6 l-0.6,-1.6 q-0.2,-1 0.8,-1 z" fill="#f89838" stroke="#e06a08" stroke-width="0.7"/>
<path d="M30.4,110 v6 M32.9,116 v1.6 M34.2,116 v1.6 M35.5,116 v1.6" stroke="#fcd0a0" stroke-width="0.5" opacity="0.8"/>
<rect x="29" y="123" width="8" height="2.6" rx="1" fill="#1e4a9a"/>
<rect x="30.2" y="124" width="5.6" height="0.6" fill="#a8c0e8"/>
</g>
<rect x="209.79999999999998" y="105.6" width="17.400000000000023" height="23.399999999999995" rx="7" fill="url(#gGrayBtn)" stroke="#8c8c8c" stroke-width="1.3"/>
<polygon points="214.9,115.9 222.1,115.9 218.5,120.2" fill="#000"/>
<rect x="412.6" y="105.6" width="17.400000000000023" height="23.399999999999995" rx="7" fill="url(#gGrayBtn)" stroke="#8c8c8c" stroke-width="1.3"/>
<polygon points="417.7,115.9 424.90000000000003,115.9 421.3,120.2" fill="#000"/>
<rect x="498.9" y="105.6" width="17.3" height="23.6" rx="7" fill="url(#gBlueBtn)" stroke="url(#gBtnStroke)" stroke-width="1.2"/>
<polygon points="504.2,116 511.2,116 507.7,119.8" fill="#000"/>
<ellipse cx="541.5" cy="124.5" rx="10" ry="1.5" fill="#000" opacity="0.08"/>
<path d="M532.6,123.6 L538.2,109.3 h6.6 L550.5,123.6 h-4.5 l-1,-3 h-6.8 l-1,3 z M539.4,117.8 h4.2 l-2.1,-5.3 z" fill="url(#gFA)" stroke="#2a58a8" stroke-width="1.3" fill-rule="evenodd" stroke-linejoin="miter"/>
<path d="M539.5,111 h4 M538.8,113 h1.5 M542.8,113 h1.5" stroke="#fff" stroke-width="0.6" opacity="0.6"/>
<path d="M567.3,122.8 L579.6,109.5 L582.7,109.5 L580.8,122.8 L577.4,122.8 L577.8,120 L573.2,120 L570.6,122.8 z M574.8,117.6 L578.1,117.6 L578.9,113 z" fill="url(#gFA)" stroke="#2a58a8" stroke-width="1.2" fill-rule="evenodd" stroke-linejoin="miter"/>
<path d="M600.3,121.3 L605.9,107.8 h3.2 L614.6,121.3 h-2.8 L610.4,117.9 h-6.0 L602.9,121.3 z M605.2,115.6 h4.3 L607.3,110.3 z" fill="url(#gFA)" stroke="#2a58a8" stroke-width="1.1" fill-rule="evenodd" stroke-linejoin="miter"/>
<rect x="599.4" y="124.4" width="16" height="2" fill="#6a94d0" stroke="#2a58a8" stroke-width="0.8"/>
<rect x="628" y="108" width="1" height="19" fill="#cfcfcf"/><rect x="629" y="108" width="1" height="19" fill="#fafafa"/>
<rect x="634.6" y="101.6" width="29.8" height="31.8" rx="8" fill="url(#gAct2)" stroke="url(#gBtnStroke)" stroke-width="1.2"/>
<rect x="638.5" y="106.5" width="21" height="20" fill="#fdfdfd" stroke="#737373" stroke-width="1"/>
<rect x="640" y="108" width="18" height="17" fill="#ebebe6"/>
<rect x="641" y="108.90" width="15.9" height="1" fill="#6e6e6e"/>
<rect x="641" y="110.92" width="11.0" height="1" fill="#6e6e6e"/>
<rect x="641" y="112.94" width="8.9" height="1" fill="#6e6e6e"/>
<rect x="641" y="114.96" width="12.1" height="1" fill="#6e6e6e"/>
<rect x="641" y="116.98" width="15.0" height="1" fill="#6e6e6e"/>
<rect x="641" y="119.00" width="6.9" height="1" fill="#6e6e6e"/>
<rect x="641" y="121.02" width="11.0" height="1" fill="#6e6e6e"/>
<rect x="641" y="123.04" width="12.1" height="1" fill="#6e6e6e"/>
<rect x="671.5" y="106.5" width="22" height="20" fill="#fdfdfd" stroke="#737373" stroke-width="1"/>
<rect x="673" y="108" width="19" height="17" fill="#ebebe6"/>
<rect x="674.35" y="108.90" width="16.1" height="1" fill="#6e6e6e"/>
<rect x="679.70" y="110.92" width="5.4" height="1" fill="#6e6e6e"/>
<rect x="677.00" y="112.94" width="10.8" height="1" fill="#6e6e6e"/>
<rect x="678.80" y="114.96" width="7.2" height="1" fill="#6e6e6e"/>
<rect x="675.25" y="116.98" width="14.3" height="1" fill="#6e6e6e"/>
<rect x="681.05" y="119.00" width="2.7" height="1" fill="#6e6e6e"/>
<rect x="679.05" y="121.02" width="6.7" height="1" fill="#6e6e6e"/>
<rect x="676.60" y="123.04" width="11.6" height="1" fill="#6e6e6e"/>
<rect x="234.5" y="143.5" width="120" height="17" fill="#efefef" stroke="#b4b4b4"/>
<rect x="347" y="144" width="345" height="17" fill="#fff"/>
<rect x="247.7" y="152" width="1.2" height="1.2" fill="#000"/>
<rect x="261.8" y="150.8" width="1.2" height="3" fill="#000"/>
<rect x="276.0" y="152" width="1.2" height="1.2" fill="#000"/>
<text x="290.7" y="156.6" font-family="Liberation Sans" font-size="13" fill="#000" text-anchor="middle" transform="translate(290.7,0) scale(0.85,1) translate(-290.7,0)">1</text>
<rect x="304.4" y="152" width="1.2" height="1.2" fill="#000"/>
<rect x="318.5" y="150.8" width="1.2" height="3" fill="#000"/>
<rect x="332.7" y="152" width="1.2" height="1.2" fill="#000"/>
<rect x="361.1" y="152" width="1.2" height="1.2" fill="#000"/>
<rect x="375.2" y="150.8" width="1.2" height="3" fill="#000"/>
<rect x="389.4" y="152" width="1.2" height="1.2" fill="#000"/>
<text x="404.1" y="156.6" font-family="Liberation Sans" font-size="13" fill="#000" text-anchor="middle" transform="translate(404.1,0) scale(0.85,1) translate(-404.1,0)">1</text>
<rect x="417.8" y="152" width="1.2" height="1.2" fill="#000"/>
<rect x="431.9" y="150.8" width="1.2" height="3" fill="#000"/>
<rect x="446.1" y="152" width="1.2" height="1.2" fill="#000"/>
<text x="460.8" y="156.6" font-family="Liberation Sans" font-size="13" fill="#000" text-anchor="middle" transform="translate(460.8,0) scale(0.85,1) translate(-460.8,0)">2</text>
<rect x="474.5" y="152" width="1.2" height="1.2" fill="#000"/>
<rect x="488.6" y="150.8" width="1.2" height="3" fill="#000"/>
<rect x="502.8" y="152" width="1.2" height="1.2" fill="#000"/>
<text x="517.5" y="156.6" font-family="Liberation Sans" font-size="13" fill="#000" text-anchor="middle" transform="translate(517.5,0) scale(0.85,1) translate(-517.5,0)">3</text>
<rect x="531.2" y="152" width="1.2" height="1.2" fill="#000"/>
<rect x="545.4" y="150.8" width="1.2" height="3" fill="#000"/>
<rect x="559.5" y="152" width="1.2" height="1.2" fill="#000"/>
<text x="574.2" y="156.6" font-family="Liberation Sans" font-size="13" fill="#000" text-anchor="middle" transform="translate(574.2,0) scale(0.85,1) translate(-574.2,0)">4</text>
<rect x="587.9" y="152" width="1.2" height="1.2" fill="#000"/>
<rect x="602.0" y="150.8" width="1.2" height="3" fill="#000"/>
<rect x="616.2" y="152" width="1.2" height="1.2" fill="#000"/>
<text x="630.9" y="156.6" font-family="Liberation Sans" font-size="13" fill="#000" text-anchor="middle" transform="translate(630.9,0) scale(0.85,1) translate(-630.9,0)">5</text>
<rect x="644.6" y="152" width="1.2" height="1.2" fill="#000"/>
<rect x="658.8" y="150.8" width="1.2" height="3" fill="#000"/>
<rect x="672.9" y="152" width="1.2" height="1.2" fill="#000"/>
<text x="687.6" y="156.6" font-family="Liberation Sans" font-size="13" fill="#000" text-anchor="middle" transform="translate(687.6,0) scale(0.85,1) translate(-687.6,0)">6</text>
<rect x="417.8" y="157.5" width="1.2" height="3.5" fill="#000"/><rect x="415.7" y="160.4" width="5.4" height="1.2" fill="#000"/>
<rect x="488.6" y="157.5" width="1.2" height="3.5" fill="#000"/><rect x="486.5" y="160.4" width="5.4" height="1.2" fill="#000"/>
<rect x="559.5" y="157.5" width="1.2" height="3.5" fill="#000"/><rect x="557.4" y="160.4" width="5.4" height="1.2" fill="#000"/>
<rect x="630.4" y="157.5" width="1.2" height="3.5" fill="#000"/><rect x="628.3" y="160.4" width="5.4" height="1.2" fill="#000"/>
<path d="M342.5,143.8 h10.5 v2.8 l-5.25,5.7 l5.25,5.7 v3 h-10.5 v-3 l5.25,-5.7 l-5.25,-5.7 z" fill="#ececec" stroke="#000" stroke-width="1.1"/>
<rect x="5" y="337" width="18" height="387" fill="#fff"/>
<rect x="5.5" y="224.5" width="17" height="112" fill="#efefef" stroke="#b4b4b4"/>
<rect x="14" y="237.4" width="1.2" height="1.2" fill="#000"/>
<rect x="13" y="251.6" width="3" height="1.2" fill="#000"/>
<rect x="14" y="265.7" width="1.2" height="1.2" fill="#000"/>
<text x="0" y="0" font-family="Liberation Sans" font-size="13" fill="#000" text-anchor="middle" transform="translate(18.6,279.9) rotate(-90) scale(0.85,1)">1</text>
<rect x="14" y="294.1" width="1.2" height="1.2" fill="#000"/>
<rect x="13" y="308.2" width="3" height="1.2" fill="#000"/>
<rect x="14" y="322.4" width="1.2" height="1.2" fill="#000"/>
<rect x="14" y="350.8" width="1.2" height="1.2" fill="#000"/>
<rect x="13" y="365.0" width="3" height="1.2" fill="#000"/>
<rect x="14" y="379.1" width="1.2" height="1.2" fill="#000"/>
<text x="0" y="0" font-family="Liberation Sans" font-size="13" fill="#000" text-anchor="middle" transform="translate(18.6,393.3) rotate(-90) scale(0.85,1)">1</text>
<rect x="14" y="407.5" width="1.2" height="1.2" fill="#000"/>
<rect x="13" y="421.7" width="3" height="1.2" fill="#000"/>
<rect x="14" y="435.8" width="1.2" height="1.2" fill="#000"/>
<text x="0" y="0" font-family="Liberation Sans" font-size="13" fill="#000" text-anchor="middle" transform="translate(18.6,450.0) rotate(-90) scale(0.85,1)">2</text>
<rect x="14" y="464.2" width="1.2" height="1.2" fill="#000"/>
<rect x="13" y="478.4" width="3" height="1.2" fill="#000"/>
<rect x="14" y="492.5" width="1.2" height="1.2" fill="#000"/>
<text x="0" y="0" font-family="Liberation Sans" font-size="13" fill="#000" text-anchor="middle" transform="translate(18.6,506.7) rotate(-90) scale(0.85,1)">3</text>
<rect x="14" y="520.9" width="1.2" height="1.2" fill="#000"/>
<rect x="13" y="535.1" width="3" height="1.2" fill="#000"/>
<rect x="14" y="549.2" width="1.2" height="1.2" fill="#000"/>
<text x="0" y="0" font-family="Liberation Sans" font-size="13" fill="#000" text-anchor="middle" transform="translate(18.6,563.4) rotate(-90) scale(0.85,1)">4</text>
<rect x="14" y="577.6" width="1.2" height="1.2" fill="#000"/>
<rect x="13" y="591.8" width="3" height="1.2" fill="#000"/>
<rect x="14" y="605.9" width="1.2" height="1.2" fill="#000"/>
<text x="0" y="0" font-family="Liberation Sans" font-size="13" fill="#000" text-anchor="middle" transform="translate(18.6,620.1) rotate(-90) scale(0.85,1)">5</text>
<rect x="14" y="634.3" width="1.2" height="1.2" fill="#000"/>
<rect x="13" y="648.5" width="3" height="1.2" fill="#000"/>
<rect x="14" y="662.6" width="1.2" height="1.2" fill="#000"/>
<text x="0" y="0" font-family="Liberation Sans" font-size="13" fill="#000" text-anchor="middle" transform="translate(18.6,676.8) rotate(-90) scale(0.85,1)">6</text>
<rect x="14" y="691.0" width="1.2" height="1.2" fill="#000"/>
<rect x="13" y="705.2" width="3" height="1.2" fill="#000"/>
<rect x="14" y="719.3" width="1.2" height="1.2" fill="#000"/>
</svg>

<!-- frames -->
<div class="a" style="left:347px;top:338px;width:400px;height:55px;border:1px solid #c6c6c6"></div>
<div class="a" style="left:347px;top:421px;width:400px;height:400px;border-left:1px solid #c6c6c6;border-top:1px solid #c6c6c6"></div>

<div class="a serif" style="left:349px;top:339px">Book Title</div>
<div class="a serif" style="left:349px;top:421.3px;line-height:27.7px">The quick brown fox jumps over the lazy<br>brown fox jumps over the lazy dog. The quick<br>fox jumps over the lazy dog. The quick brown<br>over the lazy dog. The quick brown fox</div>
<div class="a" style="left:349px;top:563.3px;font-size:24px;font-weight:bold;color:#808080;white-space:nowrap;transform:scaleX(1.1);transform-origin:0 0;word-spacing:2.7px;-webkit-text-stroke:0.6px #808080">the quick brown fox</div>
<div class="a serif" style="left:349px;top:593.7px;line-height:27.7px">The quick brown fox jumps over the lazy<br>brown fox jumps over the lazy dog. The quick<br>fox jumps over the lazy dog. The quick brown</div>

<!-- callout -->
<div class="a" style="left:53px;top:388px;width:281px;height:116px;background:#fff;border:3px solid #000"></div>
<div class="a" style="left:65px;top:400.7px;font-size:20.8px;line-height:22.9px;color:#000;white-space:nowrap;transform:scaleX(1.04);transform-origin:0 0"><span style="letter-spacing:0.12px">I will place my cursor just</span><br><span style="letter-spacing:0.5px">before the "t" of "the" to</span><br><span style="letter-spacing:0.1px">make all following head-</span><br><span style="letter-spacing:0.15px">ings reflect this sub-title.</span></div>
<svg class="a" style="left:0;top:0" width="692" height="724">
<polygon points="346.8,574.6 331.4,559.4 325.4,573.9" fill="#fff" stroke="#000" stroke-width="3" stroke-linejoin="miter" stroke-miterlimit="3"/>
<line x1="191.8" y1="503.2" x2="347" y2="574.9" stroke="#000" stroke-width="3"/>
</svg>
</body></html>
